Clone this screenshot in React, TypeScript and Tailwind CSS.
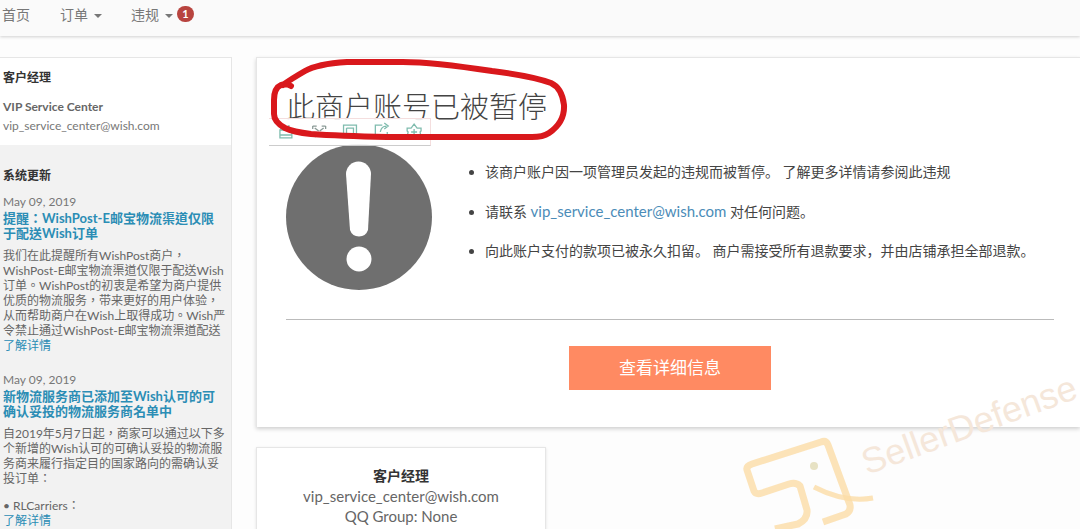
import React from "react";

const EMAIL = "vip_service_center@wish.com";

function Caret() {
  return <span className="mt-1 size-0 border-x-4 border-t-4 border-x-transparent border-t-[#777]" />;
}

function Navbar() {
  return (
    <nav className="flex h-9 items-center bg-[#fafafa] pb-2 pl-[2px] text-[14px] text-[#777] shadow-[0_1px_3px_rgba(0,0,0,0.18)]">
      <a href="#home" className="mr-[30px]">首页</a>
      <button type="button" className="mr-[29px] flex items-center gap-[6px]">订单<Caret /></button>
      <button type="button" className="flex items-center gap-[6px]">
        违规<Caret />
        <span className="-ml-[2px] flex h-4 w-[17px] items-center justify-center rounded-full bg-[#b8443f] text-[11px] font-bold text-white">1</span>
      </button>
    </nav>
  );
}

type UpdateProps = { title: string; more: string; children: React.ReactNode };

function Update({ title, more, children }: UpdateProps) {
  return (
    <article className="mb-[18px]">
      <p className="leading-[18px] text-[#777]">May 09, 2019</p>
      <h3 className="mb-[7px] text-[13px] leading-[15px] font-bold text-[#2b8db5]">{title}</h3>
      <div className="whitespace-nowrap text-[#666]">{children}</div>
      <a href="#more" className="block text-[#2b8db5]">{more}</a>
    </article>
  );
}

function Sidebar() {
  return (
    <aside className="w-[232px] shrink-0 border-t border-r border-[#e6e6e6] bg-[#f2f2f2] font-[Lato,'Noto_Sans_CJK_TC',sans-serif] text-[12px] leading-[15px]">
      <section className="h-[87px] bg-white pt-3 pl-[3px]">
        <h2 className="font-bold text-[#333]">客户经理</h2>
        <p className="mt-[14px] font-bold text-[#666]">VIP Service Center</p>
        <p className="mt-1 text-[#777]">{EMAIL}</p>
      </section>
      <section className="pt-[23px] pr-3 pl-[3px]">
        <h2 className="mb-[10px] font-bold text-[#333]">系统更新</h2>
        <Update title="提醒：WishPost-E邮宝物流渠道仅限于配送Wish订单" more="了解详情">
          我们在此提醒所有WishPost商户，<br />
          WishPost-E邮宝物流渠道仅限于配送Wish<br />
          订单。WishPost的初衷是希望为商户提供<br />
          优质的物流服务，带来更好的用户体验，<br />
          从而帮助商户在Wish上取得成功。Wish严<br />
          令禁止通过WishPost-E邮宝物流渠道配送
        </Update>
        <Update title="新物流服务商已添加至Wish认可的可确认妥投的物流服务商名单中" more="了解详情">
          自2019年5月7日起，商家可以通过以下多<br />
          个新增的Wish认可的可确认妥投的物流服<br />
          务商来履行指定目的国家路向的需确认妥<br />
          投订单：
          <p className="mt-3">• RLCarriers：</p>
        </Update>
      </section>
    </aside>
  );
}

function AlertIcon() {
  return (
    <svg viewBox="0 0 146 146" className="size-[146px] shrink-0" aria-hidden="true">
      <circle cx="73" cy="73" r="73" fill="#6f6f6f" />
      <path d="M60 30a12.500 12.500 0 0 1 25 0L82 86a9.500 9.500 0 0 1-18 0Z" fill="#fff" />
      <circle cx="73" cy="115" r="12.500" fill="#fff" />
    </svg>
  );
}

function ImageToolbar() {
  return (
    <div className="absolute top-[60px] left-3 h-7 w-[162px] border-t border-r border-b border-t-[#f4dede] border-r-[#f4dede] border-b-[#ccc] bg-white/90">
      <svg viewBox="0 0 162 26" className="h-full w-full" fill="none" stroke="#7fbcae" strokeWidth="1.300" aria-hidden="true">
        <path d="M12 6v5h8V6M11 11v8h12v-8ZM11 16h12" />
        <path d="M44 7h4M44 7v3M57 7h-4M57 7v3M46 9l4 3M55 9l-4 3M46 18l4-4M55 18l-4-4" stroke="#8a9a96" />
        <path d="M75 6h13v12H75ZM78 9h7v9M78 9v9" />
        <path d="M114 6h-7v12h12v-5M112 13q1-6 6-6M116 4l4 3-4 3" />
        <path d="M139 9h4l3-4 3 4h4v3l-1 1 1 5h-4l-3 1-3-1h-4l1-5-1-1ZM146 10v6M143 13h6" />
      </svg>
    </div>
  );
}

function RedCircle() {
  return (
    <svg viewBox="0 0 320 90" className="absolute top-0 left-0 h-[90px] w-80" fill="none" aria-hidden="true">
      <path d="M34 28Q29 25 24 27Q17 30 17 42V56Q17 64 28 70Q36 74 54 76Q82 78 130 79H275Q286 79 292 75Q308 64 307 47Q305 30 294 25Q275 18 235 13Q170 3 140 4H90Q60 6 48 13Q34 21 26 27" stroke="#d9181c" strokeWidth="6" strokeLinecap="round" strokeLinejoin="round" />
    </svg>
  );
}

function SuspensionCard() {
  return (
    <section className="relative border-t border-l border-[#e6e6e6] bg-white pt-[31px] pr-[26px] pb-[37px] pl-[29px] shadow-[0_2px_4px_rgba(0,0,0,0.18)]">
      <h1 className="text-[29px] leading-9 font-light text-[#444]">此商户账号已被暂停</h1>
      <ImageToolbar />
      <RedCircle />
      <div className="mt-[19px] flex">
        <AlertIcon />
        <ul className="ml-[53px] list-disc space-y-[19px] pt-[18px] text-[14px] leading-5 whitespace-nowrap text-[#444]">
          <li>该商户账户因一项管理员发起的违规而被暂停。 了解更多详情请参阅此违规</li>
          <li>请联系 <a href="mailto:vip_service_center@wish.com" className="text-[15px] text-[#4b8cb8]">{EMAIL}</a> 对任何问题。</li>
          <li>向此账户支付的款项已被永久扣留。 商户需接受所有退款要求，并由店铺承担全部退款。</li>
        </ul>
      </div>
      <hr className="mt-[29px] border-[#bbb]" />
      <button type="button" className="mx-auto mt-[26px] block h-11 w-[202px] bg-[#ff8a62] text-[17px] text-white">查看详细信息</button>
    </section>
  );
}

function Watermark() {
  return (
    <svg viewBox="0 0 340 160" className="pointer-events-none absolute right-0 bottom-0 h-40 w-[340px]" fill="none" aria-hidden="true">
      <g stroke="#fbdca6" strokeWidth="7" strokeOpacity="0.800" strokeLinejoin="round">
        <path d="M35 160L58 155Q68 150 67 141L60 117Q56 113 49 115L22 124Q16 126 14 122L7 101Q6 97 12 95L81 73Q86 71 88 76L110 136Q111 142 106 145L83 153" />
        <path d="M74 118Q105 134 133 129" strokeWidth="5" />
      </g>
      <circle cx="74" cy="97" r="4" fill="#e7e2c4" />
      <text x="127" y="106" transform="rotate(-20 127 106)" fontSize="36" fill="#f5e7da" fontFamily="Liberation Sans, sans-serif">SellerDefense</text>
    </svg>
  );
}

export default function App() {
  return (
    <div className="relative h-screen overflow-hidden bg-[#fdfdfd] font-[Lato,'Noto_Sans_CJK_SC',sans-serif]">
      <Navbar />
      <div className="flex gap-6 pt-[21px]">
        <Sidebar />
        <main className="min-w-0 flex-1">
          <SuspensionCard />
          <section className="mt-5 h-28 w-[290px] border border-[#e6e6e6] bg-white pt-[18px] text-center text-[15px] leading-5 text-[#666] shadow-sm">
            <h2 className="text-[14px] font-bold text-[#333]">客户经理</h2>
            <p>{EMAIL}</p>
            <p>QQ Group: None</p>
          </section>
        </main>
      </div>
      <Watermark />
    </div>
  );
}
